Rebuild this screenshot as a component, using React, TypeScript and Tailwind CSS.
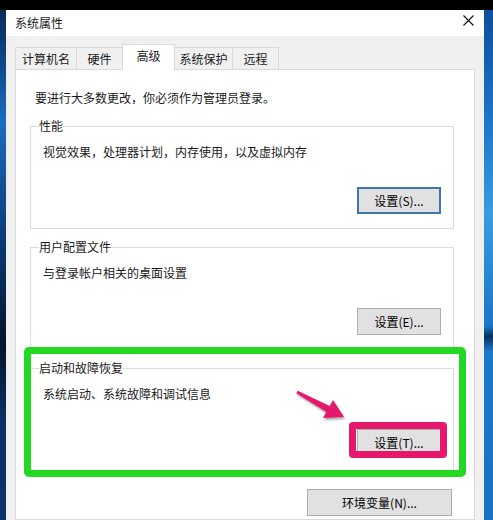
import React from 'react';

const font = "font-['Microsoft_YaHei','Noto_Sans_CJK_SC',sans-serif]";

interface BtnProps {
  label: string;
  primary?: boolean;
  wide?: boolean;
}

const Btn: React.FC<BtnProps> = ({ label, primary, wide }) => (
  <button
    className={
      (wide ? 'w-[145px] ' : 'w-[84px] ') +
      (primary ? 'border-2 border-[#3d76ab] ' : 'border border-[#adadad] ') +
      'h-[27px] bg-[#e1e1e1] text-[12px] leading-[16px] text-black flex items-center justify-center'
    }
  >
    {label}
  </button>
);

interface GroupProps {
  title: string;
  desc: string;
  btn: string;
  primary?: boolean;
  first?: boolean;
}

const Group: React.FC<GroupProps> = ({ title, desc, btn, primary, first }) => (
  <fieldset
    className={
      (first ? 'mt-[12px] ' : 'mt-[10px] ') + 'ml-[14px] mr-[20px] border border-[#dcdcdc]'
    }
  >
    <legend className="ml-[8px] text-[12px] leading-[16px] text-[#1a1a1a]">{title}</legend>
    <div className="pl-[12px] pr-[12px] pt-[10px] pb-[14px]">
      <div className="text-[12px] leading-[16px] text-[#1a1a1a]">{desc}</div>
      <div className="flex justify-end mt-[27px]">
        <Btn label={btn} primary={primary} />
      </div>
    </div>
  </fieldset>
);

const tabs = [
  { name: '计算机名', w: 'w-[62px]' },
  { name: '硬件', w: 'w-[47px]' },
  { name: '高级', w: 'w-[53px]', active: true },
  { name: '系统保护', w: 'w-[59px]' },
  { name: '远程', w: 'w-[47px]' },
];

export default function App() {
  return (
    <div className={`w-[493px] h-[520px] overflow-hidden flex flex-col bg-black ${font}`}>
      <div className="h-[10px] bg-black shrink-0" />
      <div className="flex flex-1 min-h-0">
        {/* desktop, left */}
        <div className="w-[6px] bg-[linear-gradient(180deg,#0a2c58_0%,#0f4c90_12%,#1c6cc0_22%,#0c3a74_45%,#04142c_65%,#0a2f60_80%,#0b3466_100%)]" />

        {/* window */}
        <div className="w-[478px] flex flex-col">
          <div className="h-[26px] shrink-0 bg-white flex items-center justify-between pl-[9px] pr-[10px]">
            <span className="text-[12px] leading-[16px] text-[#1a1a1a]">系统属性</span>
            <svg width="11" height="11" viewBox="0 0 11 11" className="self-start mt-[5px]">
              <path d="M0.5 0.5 L10.5 10.5 M10.5 0.5 L0.5 10.5" stroke="#111" strokeWidth="1.1" fill="none" />
            </svg>
          </div>

          <div className="flex-1 bg-[#f0f0f0] pt-[8px] px-[9px] flex flex-col">
            <div className="flex items-end">
              {tabs.map((t, i) => (
                <div
                  key={t.name}
                  className={
                    t.w +
                    (i > 0 ? ' -ml-px' : '') +
                    (t.active
                      ? ' h-[26px] -mb-px relative z-10 bg-white border-l border-t border-r border-[#d9d9d9] pb-[3px]'
                      : ' h-[22px] bg-[#f0f0f0] border-l border-t border-r border-[#d9d9d9]') +
                    ' flex items-center justify-center text-[12px] leading-[16px] text-[#1a1a1a]'
                  }
                >
                  {t.name}
                </div>
              ))}
            </div>

            <div className="relative flex-1 bg-white border border-[#d9d9d9] flex flex-col">
              <div className="mt-[20px] pl-[19px] text-[12px] leading-[16px] text-[#1a1a1a]">
                要进行大多数更改，你必须作为管理员登录。
              </div>

              <Group first title="性能" desc="视觉效果，处理器计划，内存使用，以及虚拟内存" btn="设置(S)..." primary />
              <Group title="用户配置文件" desc="与登录帐户相关的桌面设置" btn="设置(E)..." />
              <Group title="启动和故障恢复" desc="系统启动、系统故障和调试信息" btn="设置(T)..." />

              <div className="mt-[18px] mr-[22px] self-end">
                <Btn label="环境变量(N)..." wide />
              </div>

              {/* annotations */}
              <div className="absolute left-[8px] top-[277px] w-[442px] h-[130px] border-[7px] border-[#22d822] rounded-[5px]" />
              <div className="absolute left-[333px] top-[352px] w-[98px] h-[36px] border-[7px] border-[#e6186c] rounded-[4px]" />
              <svg
                className="absolute left-[274px] top-[315px] drop-shadow-[1px_2px_1px_rgba(0,0,0,0.35)]"
                width="60"
                height="40"
                viewBox="0 0 60 40"
              >
                <polygon
                  points="7.7,5.7 39.7,20.9 43,15 54,32 33,33 36.3,27.1 6.3,8.3"
                  fill="#e6186c"
                />
              </svg>
            </div>
          </div>
        </div>

        {/* desktop, right */}
        <div className="w-[9px] bg-[linear-gradient(180deg,#0d4f9a_0%,#1a72c8_20%,#3a9be0_40%,#1b74c8_62%,#08305c_64%,#1c78cc_67%,#1a70c4_100%)]" />
      </div>
    </div>
  );
}
